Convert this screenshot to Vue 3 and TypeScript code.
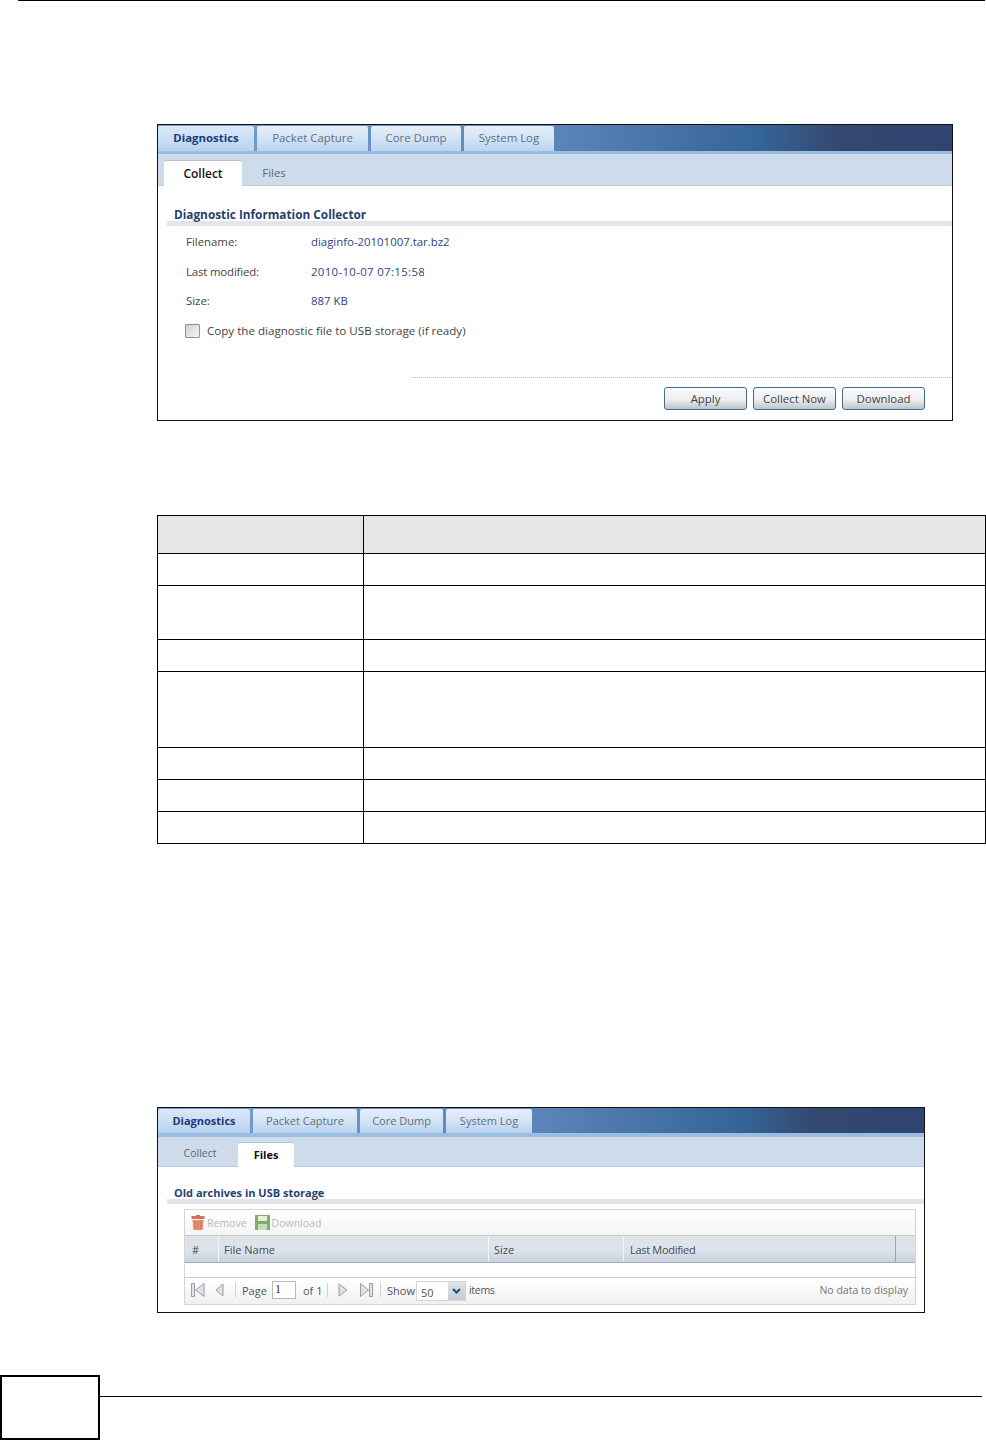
<script setup lang="ts">
const mainTabs = ['Diagnostics', 'Packet Capture', 'Core Dump', 'System Log']
const fields = [
  { label: 'Filename:', value: 'diaginfo-20101007.tar.bz2' },
  { label: 'Last modified:', value: '2010-10-07 07:15:58' },
  { label: 'Size:', value: '887 KB' },
]
const rowHeights = [38, 32, 54, 32, 76, 32, 32, 32]
const columns = [
  { name: '#', width: 34 },
  { name: 'File Name', width: 270 },
  { name: 'Size', width: 135 },
  { name: 'Last Modified', width: 272 },
  { name: '', width: 19 },
]
</script>

<template>
  <div class="page">
    <div class="top-rule" />

    <section class="panel panel-collect">
      <div class="tabbar">
        <span v-for="(t, i) in mainTabs" :key="t" class="main-tab" :class="[`c${i}`, { active: i === 0 }]">{{ t }}</span>
      </div>
      <div class="subbar">
        <span class="sub-tab active">Collect</span>
        <span class="sub-tab">Files</span>
      </div>
      <div class="collect-body">
        <h3 class="section-title">Diagnostic Information Collector</h3>
        <div class="section-rule" />
        <div class="fields">
          <div v-for="f in fields" :key="f.label" class="field">
            <span class="field-label">{{ f.label }}</span>
            <span class="field-value">{{ f.value }}</span>
          </div>
          <label class="check-row">
            <span class="check" />
            <span>Copy the diagnostic file to USB storage (if ready)</span>
          </label>
        </div>
        <div class="dots" />
        <div class="actions">
          <button class="btn">Apply</button>
          <button class="btn">Collect Now</button>
          <button class="btn">Download</button>
        </div>
      </div>
    </section>

    <div class="spec-table">
      <div v-for="(h, i) in rowHeights" :key="i" class="spec-row" :class="{ head: i === 0 }" :style="{ height: h + 'px' }">
        <div class="spec-a" />
        <div class="spec-b" />
      </div>
    </div>

    <section class="panel panel-files">
      <div class="tabbar">
        <span v-for="(t, i) in mainTabs" :key="t" class="main-tab" :class="[`f${i}`, { active: i === 0 }]">{{ t }}</span>
      </div>
      <div class="subbar small">
        <span class="sub-tab first">Collect</span>
        <span class="sub-tab active bold">Files</span>
      </div>
      <div class="files-body">
        <h3 class="section-title">Old archives in USB storage</h3>
        <div class="section-rule" />
        <div class="grid">
          <div class="grid-tools">
            <svg width="14" height="15" viewBox="0 0 14 15">
              <path d="M5 0h4v1h4.5v3H.5V1H5z" fill="#d9705a" />
              <path d="M1.5 5h11l-.8 10H2.3z" fill="#e88e76" />
              <path d="M4 6v8M7 6v8M10 6v8" stroke="#d9705a" stroke-width="1" />
            </svg>
            <span>Remove</span>
            <svg class="save" width="15" height="15" viewBox="0 0 15 15">
              <rect width="15" height="15" fill="#7fae6a" />
              <rect x="3" y="1" width="9" height="5" fill="#e6f0dc" />
              <rect x="3" y="9" width="9" height="6" fill="#c9dcb8" />
            </svg>
            <span>Download</span>
          </div>
          <div class="grid-head">
            <span v-for="c in columns" :key="c.name" class="col" :style="{ width: c.width + 'px' }">{{ c.name }}</span>
          </div>
          <div class="grid-empty" />
          <div class="pager">
            <svg width="14" height="16" viewBox="0 0 14 16" fill="#dfe3e7" stroke="#9a9ea3">
              <path d="M.5 1.5h3v13h-3zM13 1.5v13L4.5 8z" />
            </svg>
            <svg class="p-prev" width="9" height="14" viewBox="0 0 9 14" fill="#dfe3e7" stroke="#9a9ea3">
              <path d="M8 1v12L1 7z" />
            </svg>
            <i class="sep s1" />
            <span class="p-page">Page</span>
            <span class="page-input">1</span>
            <span class="p-of">of 1</span>
            <i class="sep s2" />
            <svg class="p-next" width="10" height="14" viewBox="0 0 10 14" fill="#dfe3e7" stroke="#9a9ea3">
              <path d="M1 1v12l8-6z" />
            </svg>
            <svg class="p-last" width="13" height="16" viewBox="0 0 13 16" fill="#dfe3e7" stroke="#9a9ea3">
              <path d="M.5 1.5v13L8.5 8zM9.5 1.5h3v13h-3z" />
            </svg>
            <i class="sep s3" />
            <span class="p-show">Show</span>
            <span class="select">
              <span class="select-val">50</span>
              <span class="select-btn">
                <svg width="9" height="6" viewBox="0 0 9 6"><path d="M1 1l3.5 3.5L8 1" fill="none" stroke="#1d4d86" stroke-width="2" /></svg>
              </span>
            </span>
            <span class="p-items">items</span>
            <span class="no-data">No data to display</span>
          </div>
        </div>
      </div>
    </section>

    <footer class="foot">
      <div class="foot-box" />
      <div class="foot-line" />
    </footer>
  </div>
</template>

<style>
body { background: #fff; }
</style>

<style scoped>
.page {
  width: 986px;
  height: 1440px;
  overflow: hidden;
  position: relative;
  font-family: "Open Sans", "Liberation Sans", sans-serif;
  font-size: 11.4px;
  color: #444;
}

.top-rule {
  height: 1px;
  margin-left: 18px;
  margin-right: 1px;
  background: #000;
}

.panel {
  border: 1px solid #111;
  margin-left: 157px;
  box-sizing: border-box;
  background: #fff;
}
.panel-collect { width: 796px; height: 297px; margin-top: 123px; }
.panel-files { width: 768px; height: 206px; margin-top: 263px; font-size: 11px; }

.tabbar {
  display: flex;
  height: 26px;
  gap: 3px;
  border-bottom: 3px solid #9cbde2;
  background: linear-gradient(90deg, #7aa0d0 0%, #5c84b8 50%, #356496 76%, #34486f 86%, #2f4470 100%);
}
.panel-files .tabbar { height: 25px; border-bottom-width: 4px; }

.main-tab {
  display: flex;
  align-items: center;
  justify-content: center;
  box-sizing: border-box;
  margin-top: 1px;
  padding-bottom: 2px;
  color: #5f6f80;
  background: linear-gradient(180deg, #e6eff9 0%, #d3e3f5 50%, #b9d3ef 100%);
  border-radius: 2px 2px 0 0;
}
.main-tab.active {
  color: #1f3a78;
  font-weight: 700;
  background: linear-gradient(180deg, #dbe8f7 0%, #c6dcf4 60%, #b5d0ef 100%);
}
.c0 { width: 96px; }
.c1 { width: 111px; }
.c2 { width: 90px; }
.c3 { width: 90px; }
.f0 { width: 92px; }
.f1 { width: 104px; }
.f2 { width: 83px; }
.f3 { width: 86px; }

.subbar {
  display: flex;
  height: 32px;
  box-sizing: border-box;
  padding-left: 6px;
  background: #cddbea;
  border-bottom: 1px solid #bccad9;
  align-items: flex-end;
}
.subbar.small { height: 30px; padding-left: 0; }

.sub-tab {
  height: 25px;
  width: 64px;
  display: flex;
  align-items: center;
  justify-content: center;
  color: #5e6875;
}
.subbar.small .sub-tab { padding-bottom: 2px; box-sizing: border-box; }
.sub-tab.active {
  width: 78px;
  background: #fff;
  color: #111;
  border-radius: 2px 2px 0 0;
  font-size: 12px;
  font-weight: 600;
  box-shadow: 0 -1px 0 #b9c2cc;
  margin-bottom: -1px;
}
.sub-tab.first { width: 80px; padding-left: 4px; font-size: 10.5px; }
.sub-tab.bold { width: 56px; height: 24px; font-size: 11px; font-weight: 700; }

.collect-body { height: 234px; position: relative; }
.files-body { height: 145px; }

.section-title {
  margin: 0;
  padding-left: 16px;
  font-size: 11.8px;
  font-weight: 700;
  line-height: 14px;
  color: #26406f;
}
.collect-body .section-title { padding-top: 21px; }
.files-body .section-title { padding-top: 19px; font-size: 11px; }

.section-rule {
  height: 5px;
  background: #e2e5ea;
  margin-left: 9px;
}
.files-body .section-rule { margin-top: -1px; }

.fields { padding: 1px 0 0 28px; }
.field {
  display: flex;
  height: 29.7px;
  align-items: center;
  line-height: 16px;
}
.field-label { width: 125px; color: #444; }
.field-value { color: #2e4488; }
.field:nth-child(2) .field-label { letter-spacing: -0.15px; }
.field:nth-child(2) .field-value {
  width: 113px;
  overflow: hidden;
  white-space: nowrap;
  letter-spacing: 0.35px;
}
.check-row {
  display: flex;
  align-items: center;
  gap: 7px;
  height: 29.7px;
  margin-left: -1px;
  font-size: 11.6px;
}
.check {
  width: 15px;
  height: 14px;
  box-sizing: border-box;
  border: 1px solid #8e9296;
  border-radius: 1px;
  background: linear-gradient(135deg, #d2d2d2, #f4f4f4);
}

.dots {
  position: absolute;
  left: 254px;
  right: 0;
  top: 191px;
  border-top: 1px dotted #bdbdbd;
}
.actions {
  position: absolute;
  right: 27px;
  top: 201px;
  display: flex;
  gap: 6px;
}
.btn {
  width: 83px;
  height: 23px;
  padding: 0;
  font: inherit;
  color: #3c4450;
  border: 1px solid #3f6e91;
  border-radius: 3px;
  background: linear-gradient(180deg, #fbfbfb 0%, #eeeeee 55%, #bfc4c8 100%);
}

.spec-table {
  width: 829px;
  margin-left: 157px;
  margin-top: 94px;
  border-top: 1px solid #000;
  border-left: 1px solid #000;
  box-sizing: border-box;
}
.spec-row {
  display: flex;
  box-sizing: border-box;
  border-bottom: 1px solid #000;
}
.spec-a {
  width: 206px;
  box-sizing: border-box;
  border-right: 1px solid #000;
  flex: none;
}
.spec-b {
  flex: 1;
  border-right: 1px solid #000;
}
.spec-row.head { background: #e6e6e6; }

.grid {
  margin: 5px 8px 0 26px;
  border: 1px solid #d5d5cd;
  background: #fff;
}
.grid-tools {
  display: flex;
  align-items: center;
  height: 25px;
  padding-left: 6px;
  gap: 2px;
  font-size: 10.5px;
  color: #b8b8b8;
  background: linear-gradient(180deg, #fff, #f5f5f5);
  border-bottom: 1px solid #c8c8c8;
}
.save { margin-left: 6px; }

.grid-head {
  display: flex;
  height: 27px;
  box-sizing: border-box;
  background: linear-gradient(180deg, #dce3ea 0%, #dce3ea 55%, #c8d2de 100%);
  border-bottom: 1px solid #a2aab4;
  color: #4a4a52;
}
.col {
  box-sizing: border-box;
  display: flex;
  align-items: center;
  padding-left: 5px;
  border-right: 1px solid #f1f6fb;
  flex: none;
}
.col:first-child { padding-left: 7px; }
.col:nth-child(4) { padding-left: 6px; letter-spacing: -0.3px; border-right-color: #9ba5b0; }
.col:last-child { border-right: 0; }

.grid-empty {
  height: 14px;
  border-bottom: 1px solid #c8c8c8;
}

.pager {
  display: flex;
  align-items: center;
  height: 26px;
  box-sizing: border-box;
  padding: 0 0 2px 6px;
  background: linear-gradient(180deg, #fff, #f0f0f0);
  color: #555;
}
.p-prev { margin-left: 10px; }
.p-next { margin-left: 10px; }
.p-last { margin-left: 12px; }
.sep {
  width: 1px;
  height: 14px;
  flex: none;
  background: #cfcfcf;
}
.s1 { margin-left: 11px; }
.s2 { margin-left: 5px; }
.s3 { margin-left: 7px; }
.p-page { margin-left: 6px; width: 25px; white-space: nowrap; }
.p-of { margin-left: 7px; width: 19px; white-space: nowrap; }
.p-show { margin-left: 6px; width: 28px; white-space: nowrap; }
.p-items { margin-left: 3px; font-size: 10.5px; letter-spacing: -0.3px; }
.page-input {
  width: 24px;
  height: 18px;
  margin-left: 5px;
  padding-left: 2px;
  box-sizing: border-box;
  border: 1px solid #b9b9b9;
  background: #fff;
  font-family: "Liberation Serif", serif;
  font-size: 12px;
  line-height: 15px;
  color: #333;
}
.select {
  display: flex;
  width: 50px;
  height: 20px;
  box-sizing: border-box;
  margin: 2px 0 0 1px;
  border: 1px solid #d5d5d5;
  background: #fff;
}
.select-val {
  flex: 1;
  padding-left: 4px;
  line-height: 22px;
}
.select-btn {
  width: 17px;
  display: flex;
  align-items: center;
  justify-content: center;
  background: linear-gradient(180deg, #e0e4e8, #c4cbd3);
}
.no-data {
  margin-left: auto;
  margin-right: 7px;
  font-size: 10.5px;
  color: #777;
}

.foot {
  position: absolute;
  left: 0;
  right: 0;
  top: 1375px;
  display: flex;
}
.foot-box {
  width: 100px;
  height: 65px;
  box-sizing: border-box;
  border: 2px solid #000;
  flex: none;
}
.foot-line {
  width: 882px;
  height: 1px;
  margin-top: 21px;
  background: #000;
}
</style>
